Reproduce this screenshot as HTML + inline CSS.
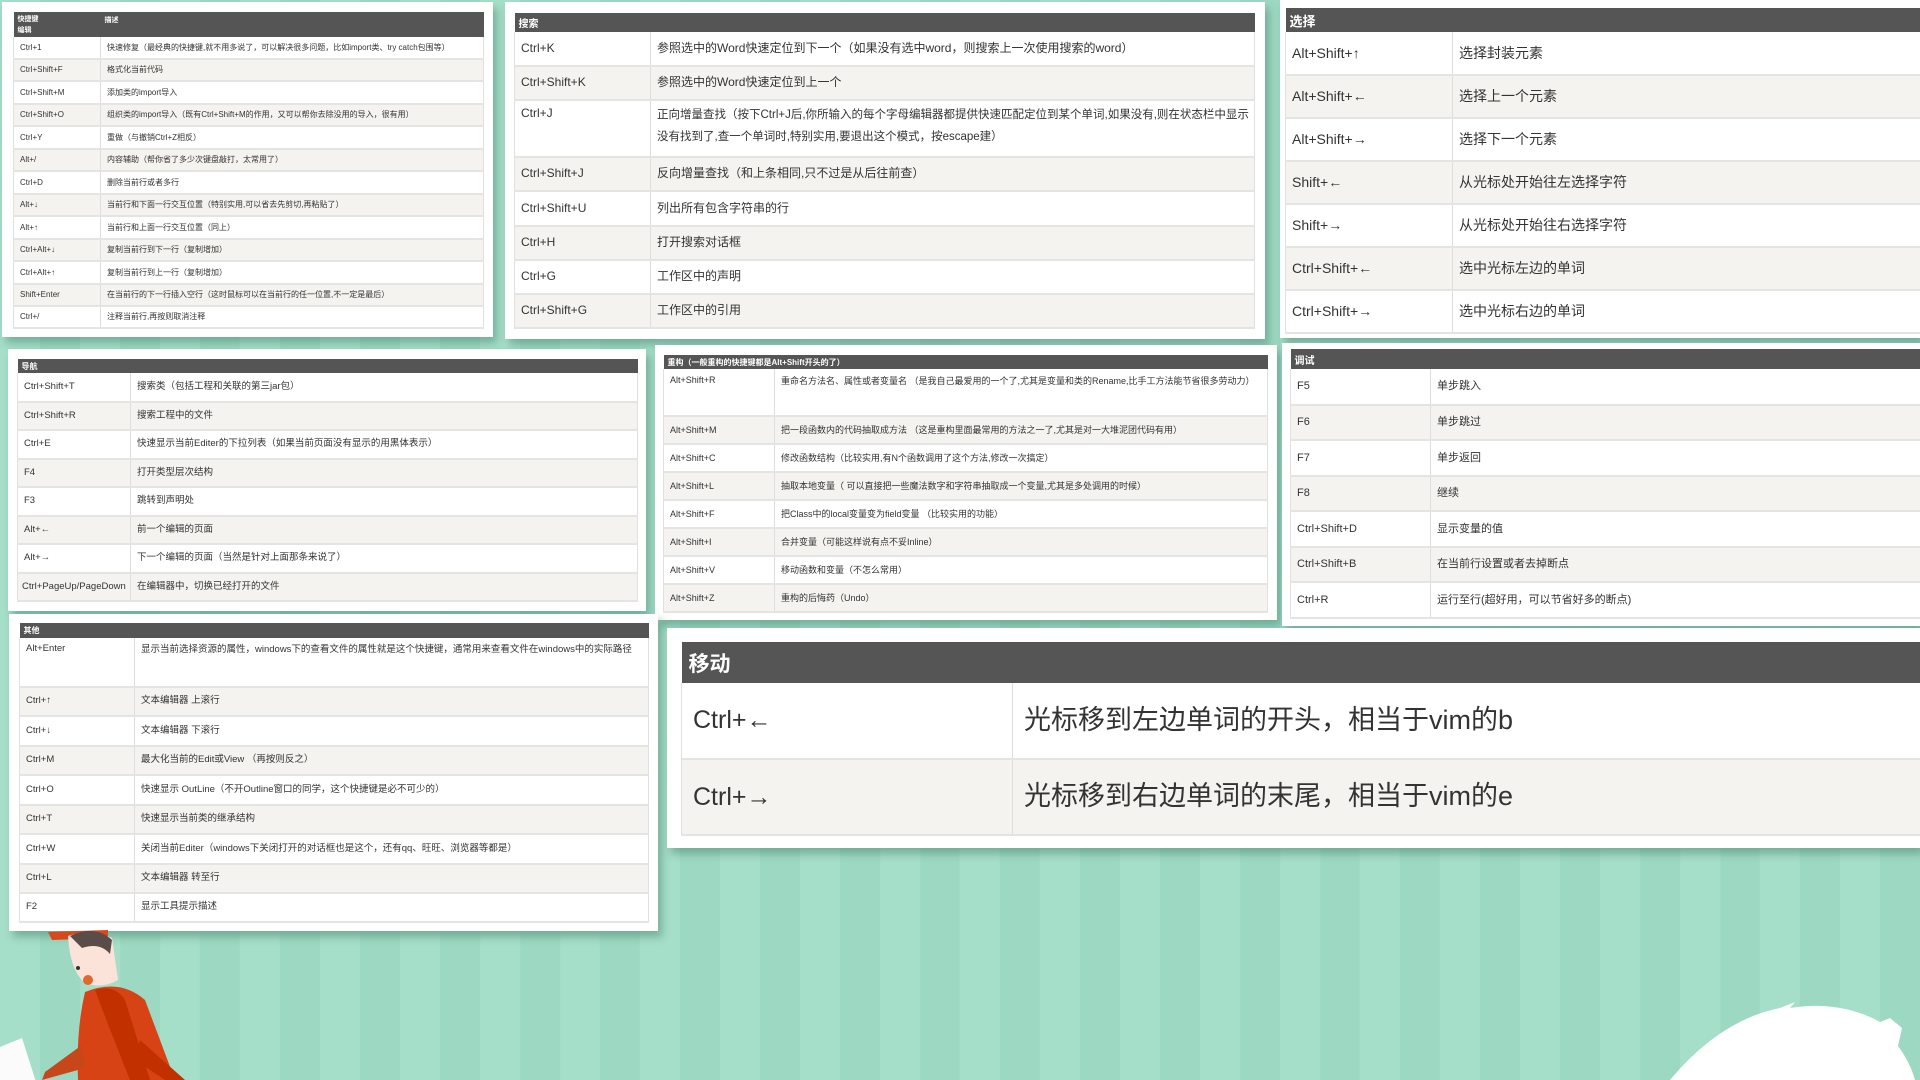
<!DOCTYPE html>
<html><head><meta charset="utf-8"><style>
*{margin:0;padding:0;box-sizing:border-box}
html,body{width:1920px;height:1080px;overflow:hidden}
body{position:relative;font-family:"Liberation Sans","Noto Sans CJK SC",sans-serif;color:#333;
background:repeating-linear-gradient(90deg,#a6dfc9 0,#a6dfc9 40px,#9dd9c2 40px,#9dd9c2 80px)}
.p{position:absolute;background:#fff;box-shadow:4px 6px 8px rgba(60,120,100,.45)}
table{position:absolute;border-collapse:collapse;table-layout:fixed}
th{background:#555;color:#fff;text-align:left;font-weight:bold;vertical-align:middle;padding-left:4px;border:none}
td{border-bottom:2px solid #e4e4e0;vertical-align:middle;padding-left:6px;overflow:hidden;white-space:nowrap;line-height:1.15}
td[style]{padding-top:0 !important}
td.t{vertical-align:top;padding-top:6px !important}
td:first-child{border-right:1px solid #ddd;border-left:1px solid #e0e0e0}
td:last-child{border-right:1px solid #e0e0e0}
td.w{white-space:normal}
tr:nth-child(odd) td{background:#f4f3ef}
tr:nth-child(even) td{background:#fff}
</style></head><body>

<!-- panel 1 -->
<div class="p" style="left:2px;top:2px;width:491px;height:335px"></div>
<table style="left:13px;top:12px;width:471px;font-size:8px">
<colgroup><col style="width:87px"><col></colgroup>
<tr style="height:25px"><th style="font-size:7px;line-height:11px">快捷键<br>编辑</th><th style="font-size:7px;vertical-align:top;padding-top:3px">描述</th></tr>
<tr style="height:22px"><td>Ctrl+1</td><td>快速修复（最经典的快捷键,就不用多说了，可以解决很多问题，比如import类、try catch包围等）</td></tr>
<tr style="height:22px"><td>Ctrl+Shift+F</td><td>格式化当前代码</td></tr>
<tr style="height:23px"><td>Ctrl+Shift+M</td><td>添加类的import导入</td></tr>
<tr style="height:22px"><td>Ctrl+Shift+O</td><td>组织类的import导入（既有Ctrl+Shift+M的作用，又可以帮你去除没用的导入，很有用）</td></tr>
<tr style="height:23px"><td>Ctrl+Y</td><td>重做（与撤销Ctrl+Z相反）</td></tr>
<tr style="height:22px"><td>Alt+/</td><td>内容辅助（帮你省了多少次键盘敲打，太常用了）</td></tr>
<tr style="height:23px"><td>Ctrl+D</td><td>删除当前行或者多行</td></tr>
<tr style="height:22px"><td>Alt+↓</td><td>当前行和下面一行交互位置（特别实用,可以省去先剪切,再粘贴了）</td></tr>
<tr style="height:23px"><td>Alt+↑</td><td>当前行和上面一行交互位置（同上）</td></tr>
<tr style="height:22px"><td>Ctrl+Alt+↓</td><td>复制当前行到下一行（复制增加）</td></tr>
<tr style="height:23px"><td>Ctrl+Alt+↑</td><td>复制当前行到上一行（复制增加）</td></tr>
<tr style="height:22px"><td>Shift+Enter</td><td>在当前行的下一行插入空行（这时鼠标可以在当前行的任一位置,不一定是最后）</td></tr>
<tr style="height:22px"><td>Ctrl+/</td><td>注释当前行,再按则取消注释</td></tr>
</table>

<!-- 搜索 -->
<div class="p" style="left:505px;top:2px;width:760px;height:337px"></div>
<table style="left:514px;top:13px;width:741px;font-size:12px">
<colgroup><col style="width:136px"><col></colgroup>
<tr style="height:19px"><th style="font-size:10px">搜索</th><th></th></tr>
<tr style="height:34px"><td>Ctrl+K</td><td>参照选中的Word快速定位到下一个（如果没有选中word，则搜索上一次使用搜索的word）</td></tr>
<tr style="height:34px"><td>Ctrl+Shift+K</td><td>参照选中的Word快速定位到上一个</td></tr>
<tr style="height:57px"><td class="t">Ctrl+J</td><td class="w t" style="padding-top:3px !important;line-height:22px;font-size:11.5px">正向增量查找（按下Ctrl+J后,你所输入的每个字母编辑器都提供快速匹配定位到某个单词,如果没有,则在状态栏中显示没有找到了,查一个单词时,特别实用,要退出这个模式，按escape建）</td></tr>
<tr style="height:34px"><td>Ctrl+Shift+J</td><td>反向增量查找（和上条相同,只不过是从后往前查）</td></tr>
<tr style="height:35px"><td>Ctrl+Shift+U</td><td>列出所有包含字符串的行</td></tr>
<tr style="height:34px"><td>Ctrl+H</td><td>打开搜索对话框</td></tr>
<tr style="height:34px"><td>Ctrl+G</td><td>工作区中的声明</td></tr>
<tr style="height:34px"><td>Ctrl+Shift+G</td><td>工作区中的引用</td></tr>
</table>

<!-- 选择 -->
<div class="p" style="left:1280px;top:0px;width:640px;height:338px"></div>
<table style="left:1285px;top:8px;width:640px;font-size:14px">
<colgroup><col style="width:167px"><col></colgroup>
<tr style="height:24px"><th style="font-size:13px">选择</th><th></th></tr>
<tr style="height:43px"><td>Alt+Shift+↑</td><td>选择封装元素</td></tr>
<tr style="height:43px"><td>Alt+Shift+←</td><td>选择上一个元素</td></tr>
<tr style="height:43px"><td>Alt+Shift+→</td><td>选择下一个元素</td></tr>
<tr style="height:43px"><td>Shift+←</td><td>从光标处开始往左选择字符</td></tr>
<tr style="height:43px"><td>Shift+→</td><td>从光标处开始往右选择字符</td></tr>
<tr style="height:43px"><td>Ctrl+Shift+←</td><td>选中光标左边的单词</td></tr>
<tr style="height:43px"><td>Ctrl+Shift+→</td><td>选中光标右边的单词</td></tr>
</table>

<!-- 导航 -->
<div class="p" style="left:8px;top:349px;width:638px;height:262px"></div>
<table style="left:17px;top:359px;width:621px;font-size:9.5px">
<colgroup><col style="width:113px"><col></colgroup>
<tr style="height:14px"><th style="font-size:8px">导航</th><th></th></tr>
<tr style="height:29px"><td>Ctrl+Shift+T</td><td>搜索类（包括工程和关联的第三jar包）</td></tr>
<tr style="height:28px"><td>Ctrl+Shift+R</td><td>搜索工程中的文件</td></tr>
<tr style="height:29px"><td>Ctrl+E</td><td>快速显示当前Editer的下拉列表（如果当前页面没有显示的用黑体表示）</td></tr>
<tr style="height:28px"><td>F4</td><td>打开类型层次结构</td></tr>
<tr style="height:29px"><td>F3</td><td>跳转到声明处</td></tr>
<tr style="height:28px"><td>Alt+←</td><td>前一个编辑的页面</td></tr>
<tr style="height:29px"><td>Alt+→</td><td>下一个编辑的页面（当然是针对上面那条来说了）</td></tr>
<tr style="height:28px"><td style="padding-left:4px">Ctrl+PageUp/PageDown</td><td>在编辑器中，切换已经打开的文件</td></tr>
</table>

<!-- 重构 -->
<div class="p" style="left:655px;top:345px;width:622px;height:275px"></div>
<table style="left:663px;top:355px;width:605px;font-size:9px">
<colgroup><col style="width:111px"><col></colgroup>
<tr style="height:14px"><th colspan="2" style="font-size:8px">重构（一般重构的快捷键都是Alt+Shift开头的了）</th></tr>
<tr style="height:47px"><td class="t">Alt+Shift+R</td><td class="w t" style="padding-top:3px !important;line-height:18px">重命名方法名、属性或者变量名 （是我自己最爱用的一个了,尤其是变量和类的Rename,比手工方法能节省很多劳动力）</td></tr>
<tr style="height:28px"><td>Alt+Shift+M</td><td>把一段函数内的代码抽取成方法 （这是重构里面最常用的方法之一了,尤其是对一大堆泥团代码有用）</td></tr>
<tr style="height:28px"><td>Alt+Shift+C</td><td>修改函数结构（比较实用,有N个函数调用了这个方法,修改一次搞定）</td></tr>
<tr style="height:28px"><td>Alt+Shift+L</td><td>抽取本地变量（ 可以直接把一些魔法数字和字符串抽取成一个变量,尤其是多处调用的时候）</td></tr>
<tr style="height:28px"><td>Alt+Shift+F</td><td>把Class中的local变量变为field变量 （比较实用的功能）</td></tr>
<tr style="height:28px"><td>Alt+Shift+I</td><td>合并变量（可能这样说有点不妥Inline）</td></tr>
<tr style="height:28px"><td>Alt+Shift+V</td><td>移动函数和变量（不怎么常用）</td></tr>
<tr style="height:28px"><td>Alt+Shift+Z</td><td>重构的后悔药（Undo）</td></tr>
</table>

<!-- 调试 -->
<div class="p" style="left:1282px;top:343px;width:638px;height:283px"></div>
<table style="left:1290px;top:349px;width:640px;font-size:11px">
<colgroup><col style="width:140px"><col></colgroup>
<tr style="height:20px"><th style="font-size:10px">调试</th><th></th></tr>
<tr style="height:36px"><td>F5</td><td>单步跳入</td></tr>
<tr style="height:35px"><td>F6</td><td>单步跳过</td></tr>
<tr style="height:36px"><td>F7</td><td>单步返回</td></tr>
<tr style="height:35px"><td>F8</td><td>继续</td></tr>
<tr style="height:36px"><td>Ctrl+Shift+D</td><td>显示变量的值</td></tr>
<tr style="height:35px"><td>Ctrl+Shift+B</td><td>在当前行设置或者去掉断点</td></tr>
<tr style="height:36px"><td>Ctrl+R</td><td>运行至行(超好用，可以节省好多的断点)</td></tr>
</table>

<!-- 其他 -->
<div class="p" style="left:9px;top:614px;width:649px;height:317px"></div>
<table style="left:19px;top:623px;width:630px;font-size:9.5px">
<colgroup><col style="width:115px"><col></colgroup>
<tr style="height:15px"><th style="font-size:8px">其他</th><th></th></tr>
<tr style="height:49px"><td class="t">Alt+Enter</td><td class="w t" style="padding-top:2px !important;line-height:19px">显示当前选择资源的属性，windows下的查看文件的属性就是这个快捷键，通常用来查看文件在windows中的实际路径</td></tr>
<tr style="height:29px"><td>Ctrl+↑</td><td>文本编辑器 上滚行</td></tr>
<tr style="height:30px"><td>Ctrl+↓</td><td>文本编辑器 下滚行</td></tr>
<tr style="height:29px"><td>Ctrl+M</td><td>最大化当前的Edit或View （再按则反之）</td></tr>
<tr style="height:30px"><td>Ctrl+O</td><td>快速显示 OutLine（不开Outline窗口的同学，这个快捷键是必不可少的）</td></tr>
<tr style="height:29px"><td>Ctrl+T</td><td>快速显示当前类的继承结构</td></tr>
<tr style="height:30px"><td>Ctrl+W</td><td>关闭当前Editer（windows下关闭打开的对话框也是这个，还有qq、旺旺、浏览器等都是）</td></tr>
<tr style="height:29px"><td>Ctrl+L</td><td>文本编辑器 转至行</td></tr>
<tr style="height:29px"><td>F2</td><td>显示工具提示描述</td></tr>
</table>

<!-- 移动 -->
<div class="p" style="left:667px;top:628px;width:1253px;height:220px"></div>
<table style="left:681px;top:642px;width:1250px;font-size:25px">
<colgroup><col style="width:331px"><col></colgroup>
<tr style="height:41px"><th style="font-size:21px;padding-left:7px">移动</th><th></th></tr>
<tr style="height:76px"><td style="padding-left:11px">Ctrl+←</td><td style="padding-left:11px;font-size:27px">光标移到左边单词的开头，相当于vim的b</td></tr>
<tr style="height:76px"><td style="padding-left:11px">Ctrl+→</td><td style="padding-left:11px;font-size:27px">光标移到右边单词的末尾，相当于vim的e</td></tr>
</table>

<!-- character bottom-left -->
<svg style="position:absolute;left:0;top:920px" width="260" height="160" viewBox="0 0 260 160">
<path d="M48 12 L108 10 L108 18 L52 20 Z" fill="#d9481b"/>
<path d="M68 16 Q90 8 112 18 L118 60 Q100 70 84 62 Q70 50 68 16Z" fill="#fbe3da"/>
<path d="M70 16 Q95 4 112 20 L110 34 Q100 22 82 28 Z" fill="#5a4c48"/>
<circle cx="78" cy="48" r="2" fill="#333"/><circle cx="88" cy="60" r="5" fill="#e0692f"/>
<path d="M85 72 Q120 58 145 80 L175 160 L78 160 Q76 110 85 72Z" fill="#d84315"/>
<path d="M95 70 Q115 64 125 80 L150 160 L130 160 Q110 110 95 70Z" fill="#c23000"/>
<path d="M82 125 L45 152 L42 160 L85 148Z" fill="#c7461a"/>
<path d="M140 120 L185 160 L165 160 L135 140Z" fill="#c23000"/>
<path d="M0 127 L22 118 L36 162 L10 170 L0 160Z" fill="#fbfbfb"/>
</svg>

<!-- white blob bottom-right -->
<svg style="position:absolute;left:1640px;top:1000px" width="280" height="80" viewBox="0 0 280 80">
<path d="M30 80 Q80 20 140 8 L155 2 L150 8 Q200 0 240 22 L250 18 L262 28 L258 46 Q270 62 275 80Z" fill="#fff"/>
</svg>
</body></html>
